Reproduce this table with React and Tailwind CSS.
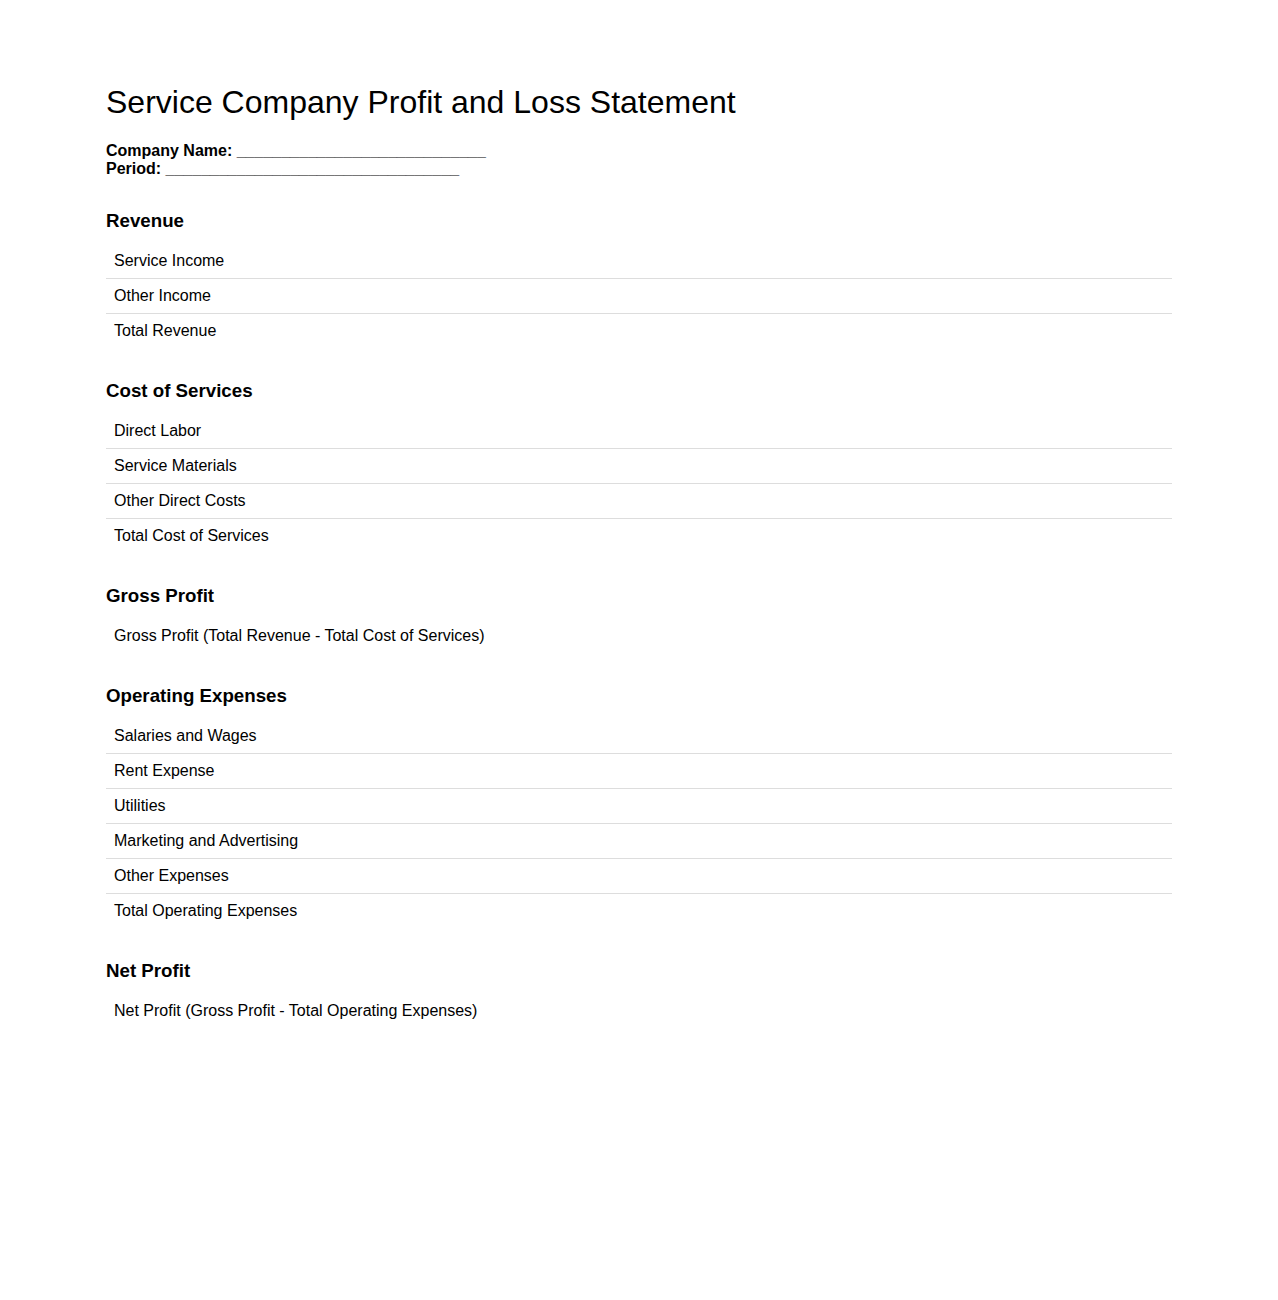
const sections = [
  {
    title: "Revenue",
    rows: ["Service Income", "Other Income", "Total Revenue"],
  },
  {
    title: "Cost of Services",
    rows: [
      "Direct Labor",
      "Service Materials",
      "Other Direct Costs",
      "Total Cost of Services",
    ],
  },
  {
    title: "Gross Profit",
    rows: ["Gross Profit (Total Revenue - Total Cost of Services)"],
  },
  {
    title: "Operating Expenses",
    rows: [
      "Salaries and Wages",
      "Rent Expense",
      "Utilities",
      "Marketing and Advertising",
      "Other Expenses",
      "Total Operating Expenses",
    ],
  },
  {
    title: "Net Profit",
    rows: ["Net Profit (Gross Profit - Total Operating Expenses)"],
  },
];

const Section = ({ title, rows, first }) => (
  <div className={first ? "mt-[32px]" : "mt-[32.5px]"}>
    <h3 className="text-[18.72px] leading-[21.5px] font-bold">{title}</h3>
    <div className="mt-3 flex flex-col">
      {rows.map((row, i) => (
        <div
          key={i}
          className={
            i < rows.length - 1
              ? "px-2 py-2 leading-[18px] border-b border-[#dddddd]"
              : "px-2 py-2 leading-[18px]"
          }
        >
          {row}
        </div>
      ))}
    </div>
  </div>
);

export default function App() {
  return (
    <div
      className="min-h-[1300px] bg-white text-black px-[106px] pt-[84px] text-[16px]"
      style={{ fontFamily: '"Liberation Sans", Arial, sans-serif' }}
    >
      <h1 className="text-[32px] leading-[37px] font-normal">
        Service Company Profit and Loss Statement
      </h1>

      <div className="mt-[21px] font-bold leading-[18px]">
        <div>Company Name: ____________________________</div>
        <div>Period: _________________________________</div>
      </div>

      {sections.map((s, i) => (
        <Section key={s.title} title={s.title} rows={s.rows} first={i === 0} />
      ))}
    </div>
  );
}
